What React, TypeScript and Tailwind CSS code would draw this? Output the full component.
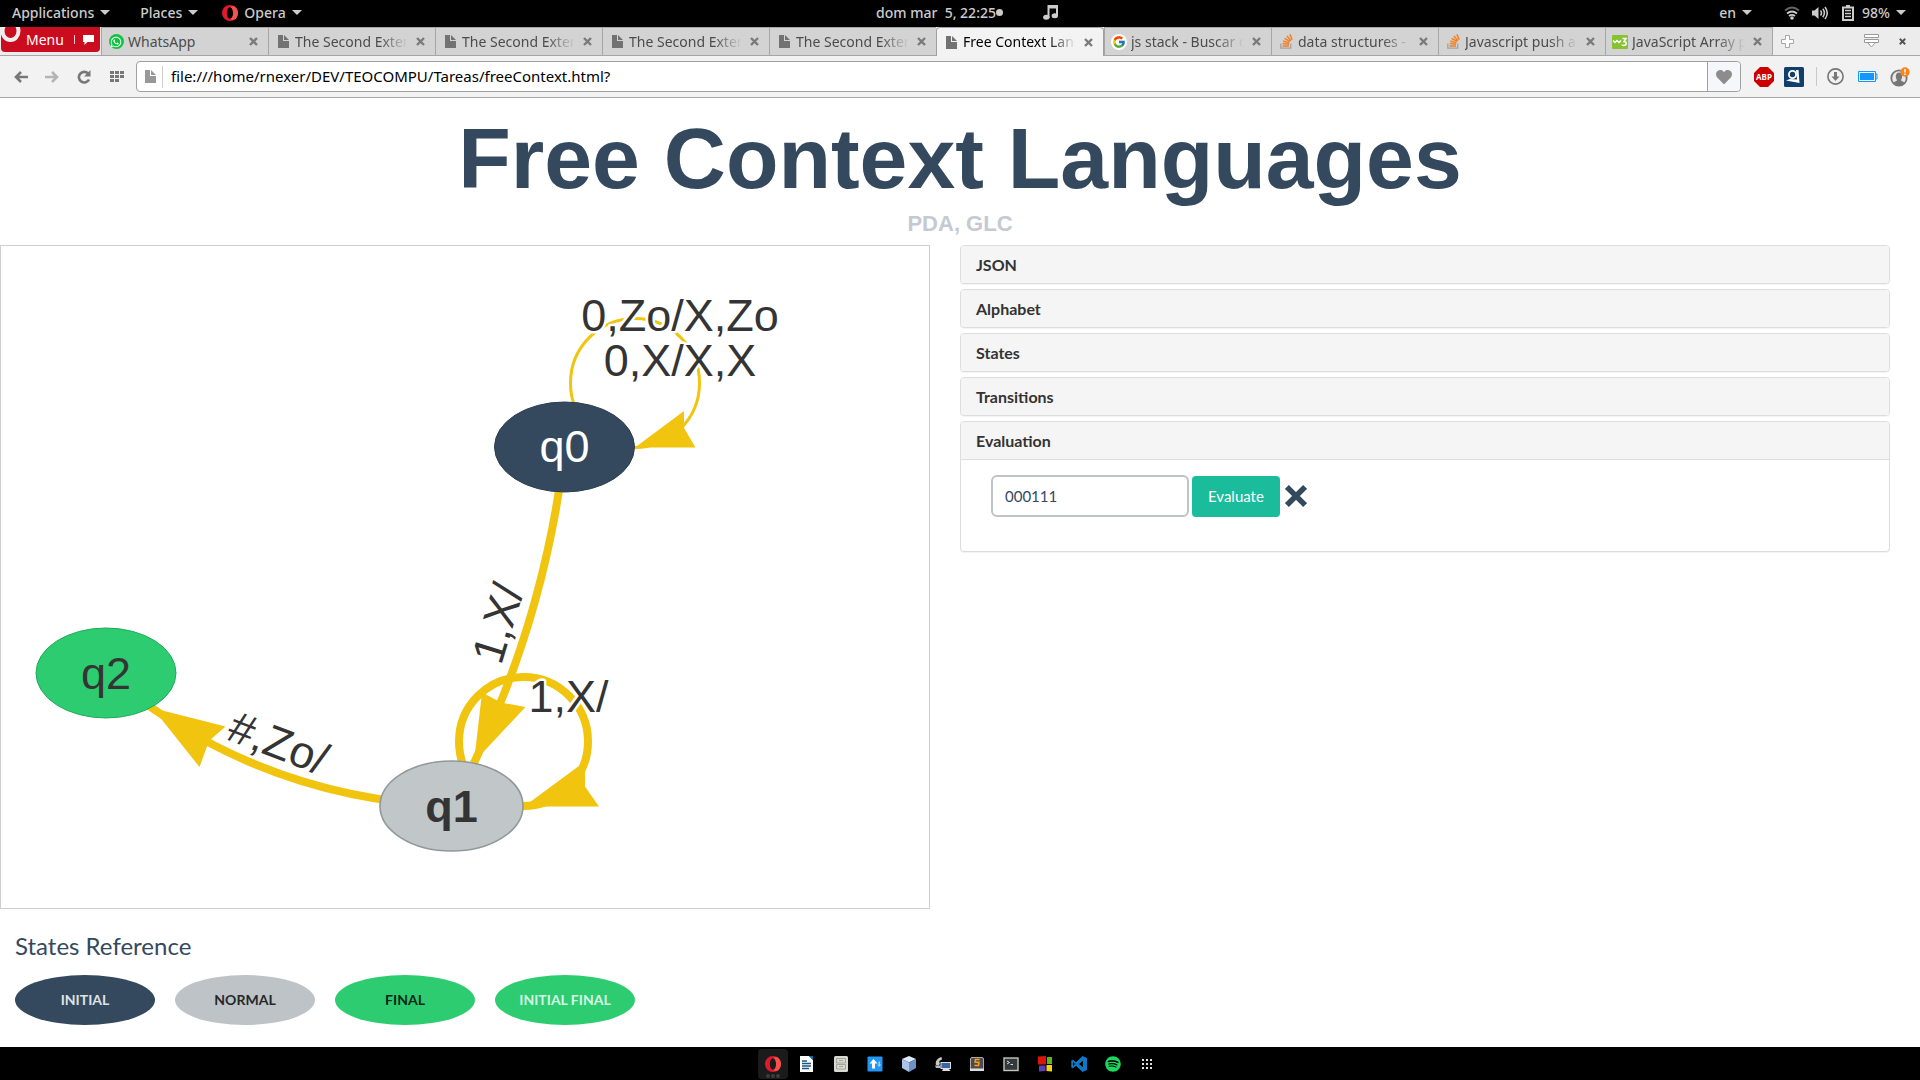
import { useState } from "react";
import type { ReactNode } from "react";
import { FcGoogle } from "react-icons/fc";
import { FaHeart, FaSpotify, FaWhatsapp } from "react-icons/fa";

function Caret() {
  return (
    <svg viewBox="0 0 10 5" className="h-[5px] w-2.5 fill-[#cccccc]" aria-hidden="true">
      <path d="M0 0h10L5 5z" />
    </svg>
  );
}

function OperaIcon({ className }: { className: string }) {
  return (
    <svg viewBox="0 0 16 16" className={className} aria-hidden="true">
      <path fill="#e3182b" fillRule="evenodd" d="M8 0a8 8 0 100 16A8 8 0 008 0zm0 2.2c1.9 0 3.1 2.6 3.1 5.8S9.900 13.800 8 13.800 4.900 11.200 4.900 8 6.100 2.200 8 2.200z" />
      <path fill="#f4534c" d="M8 2.200C9 1.200 10.800 1 12.200 1.200a8 8 0 010 13.600c-1.500.3-3.200 0-4.200-1 1.900 0 3.100-2.600 3.100-5.800S9.900 2.200 8 2.200z" />
    </svg>
  );
}

function PageIcon({ light = false }: { light?: boolean }) {
  return (
    <svg viewBox="0 0 11 13" className={light ? "h-[13px] w-[11px] shrink-0 fill-[#989898]" : "h-[13px] w-[11px] shrink-0 fill-[#727272]"} aria-hidden="true">
      <path d="M0 0h5v6h6v7H0z" />
      <path d="M6 0l5 5H6z" />
    </svg>
  );
}

function StackIcon() {
  return (
    <svg viewBox="0 0 13 15" className="h-[15px] w-[13px] shrink-0" fill="none" aria-hidden="true">
      <path stroke="#a0a3a6" strokeWidth="1.3" d="M.8 9.500v4.700h10V9.500" />
      <path stroke="#f48024" strokeWidth="1.500" d="M2.500 12h6.500M2.600 9.600l6.500.7M3.200 7l6.200 1.900M4.600 4.300l5.500 3.200M6.900 2l4.100 4.700M9.900.4l2.300 5.400" />
    </svg>
  );
}

function W3Icon() {
  return (
    <svg viewBox="0 0 16 14" className="h-3.5 w-4 shrink-0" aria-hidden="true">
      <rect width="16" height="14" rx="1" fill="#86c232" />
      <path d="M1 5.500l2 2 2-2 2 2 2-2M10.500 3.500h3.500l-2 3c3 0 3 4-.5 4-1 0-1.500-.5-1.500-1" stroke="#fff" strokeWidth="1.500" fill="none" />
    </svg>
  );
}

function CloseIcon({ small = false }: { small?: boolean }) {
  return (
    <svg viewBox="0 0 9 9" className={small ? "size-[7px]" : "size-[9px]"} aria-hidden="true">
      <path d="M1 1l7 7M8 1L1 8" stroke={small ? "#555" : "#7a7a7a"} strokeWidth="2.400" />
    </svg>
  );
}

function WhatsIcon() {
  return (
    <span className="flex size-[15px] shrink-0 items-center justify-center rounded-full bg-[#12c242] text-white">
      <FaWhatsapp size={12} />
    </span>
  );
}

function GIcon() {
  return (
    <span className="flex size-4 shrink-0 items-center justify-center rounded-full bg-white">
      <FcGoogle size={14} />
    </span>
  );
}

function SystemBar() {
  return (
    <header className="flex h-[27px] shrink-0 items-center bg-black pb-0.5 text-sm font-medium text-[#cccccc]">
      <nav className="flex flex-1 items-center gap-[30px] pl-3">
        <button className="flex items-center gap-1.5">Applications <Caret /></button>
        <button className="flex items-center gap-1.5">Places <Caret /></button>
        <button className="flex items-center gap-1.5"><OperaIcon className="-ml-1.5 size-4" /> Opera <Caret /></button>
      </nav>
      <div className="flex items-center pl-4">
        <span className="whitespace-pre">dom mar  5, 22:25</span>
        <span className="size-[7px] rounded-full bg-[#cccccc]" />
        <svg viewBox="0 0 15 15" className="ml-10 size-[15px] fill-[#cccccc]" aria-hidden="true">
          <path d="M4.500 0H15v11h-2V3.500H6.500V13h-2z" />
          <ellipse cx="3.300" cy="12.300" rx="3.200" ry="2.500" />
          <ellipse cx="11.800" cy="10.800" rx="3.200" ry="2.500" />
        </svg>
      </div>
      <div className="flex flex-1 items-center justify-end pr-3.5">
        <button className="flex items-center gap-1.5">en <Caret /></button>
        <svg viewBox="0 0 16 14" className="ml-8 h-3.5 w-4" fill="none" aria-hidden="true">
          <path d="M1 4.500Q8-1.500 15 4.500" stroke="#666" strokeWidth="1.800" />
          <path d="M3 7.500q5-4 10 0M5 10q3-2.200 6 0" stroke="#ccc" strokeWidth="1.800" />
          <circle cx="8" cy="12" r="1.800" fill="#ccc" />
        </svg>
        <svg viewBox="0 0 16 14" className="ml-3 h-3.5 w-4" fill="none" aria-hidden="true">
          <path d="M0 4.500h2.500L6.500 1v12L2.500 9.500H0z" fill="#ccc" />
          <path d="M8.500 4.500q2 2.500 0 5M10.800 2.800q3.200 4.200 0 8.400M13 1q4.500 6 0 12" stroke="#ccc" strokeWidth="1.500" />
        </svg>
        <svg viewBox="0 0 12 16" className="mr-2 ml-3.5 h-4 w-3" fill="none" stroke="#ccc" aria-hidden="true">
          <path d="M1 2.500h10V15H1zM4 1h4" strokeWidth="2" />
          <path d="M3 5.500h6M3 8.500h6M3 11.500h6" strokeWidth="1.500" />
        </svg>
        <button className="flex items-center gap-1.5">98% <Caret /></button>
      </div>
    </header>
  );
}

const tabs: { title: string; icon: ReactNode; active?: boolean }[] = [
  { title: "WhatsApp", icon: <WhatsIcon /> },
  { title: "The Second Exten", icon: <PageIcon /> },
  { title: "The Second Exten", icon: <PageIcon /> },
  { title: "The Second Exten", icon: <PageIcon /> },
  { title: "The Second Exten", icon: <PageIcon /> },
  { title: "Free Context Lan", icon: <PageIcon />, active: true },
  { title: "js stack - Buscar c", icon: <GIcon /> },
  { title: "data structures -", icon: <StackIcon /> },
  { title: "Javascript push ar", icon: <StackIcon /> },
  { title: "JavaScript Array p", icon: <W3Icon /> },
];

function TabStrip() {
  return (
    <div className="flex h-[29px] shrink-0 bg-[#ececec]">
      <div className="w-[101px] shrink-0 border-b border-[#a6a6a6] pl-px">
        <button className="relative flex h-[25px] w-[99px] items-center overflow-hidden rounded-b-sm bg-[#cb0c1e] pl-[25px] text-sm text-white">
          <svg viewBox="0 0 20 16" className="absolute top-0 left-0 h-4 w-5" aria-hidden="true">
            <ellipse cx="9.500" cy="4" rx="8" ry="9" fill="none" stroke="#eeeeee" strokeWidth="4" />
          </svg>
          Menu
          <span className="ml-2.5 h-[9px] w-px bg-white/80" />
          <svg viewBox="0 0 11 10" className="ml-2 h-2.5 w-[11px] fill-white" aria-hidden="true">
            <path d="M0 0h11v7H4.500L1.500 10V7H0z" />
          </svg>
        </button>
      </div>
      <div role="tablist" className="flex w-[1671px] min-w-0">
        {tabs.map((tab, i) => (
          <div
            key={i}
            className={
              tab.active
                ? "flex min-w-0 flex-1 items-center rounded-t border border-b-0 border-[#a0a0a0] bg-[#f3f3f3] px-1.5 text-black"
                : "flex min-w-0 flex-1 items-center border-y border-l border-[#a6a6a6] bg-[#d3d3d3] px-1.5 text-[#4c4c4c]"
            }
          >
            <button role="tab" aria-selected={!!tab.active} className="flex min-w-0 flex-1 items-center gap-1 text-sm">
              <span className="flex min-w-4 shrink-0 justify-center">{tab.icon}</span>
              <span
                className={
                  tab.title === "WhatsApp"
                    ? "min-w-0 flex-1 text-left whitespace-nowrap"
                    : "min-w-0 flex-1 overflow-hidden text-left whitespace-nowrap [mask-image:linear-gradient(to_right,black_75%,transparent)]"
                }
              >
                {tab.title}
              </span>
            </button>
            <button aria-label={"Close " + tab.title} className="mr-1 ml-2 shrink-0"><CloseIcon /></button>
          </div>
        ))}
      </div>
      <div className="flex min-w-[146px] flex-1 items-center border-b border-l border-[#a6a6a6] pr-3.5 pl-2">
        <button aria-label="New tab">
          <svg viewBox="0 0 13 13" className="size-[13px]" aria-hidden="true">
            <path d="M4.500.5h4v4h4v4h-4v4h-4v-4h-4v-4h4z" fill="#fff" stroke="#a6a6a6" />
          </svg>
        </button>
        <button aria-label="Tab menu" className="mr-5 ml-auto">
          <svg viewBox="0 0 15 14" className="h-3.5 w-[15px]" fill="#fff" stroke="#999" aria-hidden="true">
            <path d="M.5.5h14v3H.5zM.5 5.500h14v3H.5zM3.500 8.500h8l-4 4.500z" />
          </svg>
        </button>
        <button aria-label="Close window"><CloseIcon small /></button>
      </div>
    </div>
  );
}

function Toolbar() {
  return (
    <div className="flex h-[42px] shrink-0 items-center border-b border-[#a6a6a6] bg-[#f2f2f2] pr-2.5 pl-3.5">
      <button aria-label="Back">
        <svg viewBox="0 0 14 12" className="h-3 w-3.5" fill="none" stroke="#777" strokeWidth="2.600" aria-hidden="true"><path d="M7 1L2 6l5 5M2 6h12" /></svg>
      </button>
      <button aria-label="Forward" className="ml-[17px]">
        <svg viewBox="0 0 14 12" className="h-3 w-3.5" fill="none" stroke="#b4b4b4" strokeWidth="2.600" aria-hidden="true"><path d="M7 1l5 5-5 5M12 6H0" /></svg>
      </button>
      <button aria-label="Reload" className="ml-[18px]">
        <svg viewBox="0 0 14 14" className="size-3.5" fill="none" aria-hidden="true">
          <path d="M11 3.500A5.300 5.300 0 1012 9.500" stroke="#777" strokeWidth="2.600" />
          <path d="M13.500 0v6.500H7z" fill="#777" />
        </svg>
      </button>
      <button aria-label="Speed dial" className="ml-[19px]">
        <svg viewBox="0 0 14 12" className="h-3 w-3.5 fill-[#777]" aria-hidden="true">
          <path d="M0 0h4v3H0zM5 0h4v3H5zM10 0h4v3h-4zM0 4h4v3H0zM5 4h4v3H5zM10 4h4v3h-4zM0 8h4v3H0zM5 8h4v3H5z" />
        </svg>
      </button>
      <div className="ml-3 flex h-[31px] min-w-0 flex-1 items-center rounded-sm border border-[#a0a0a0] bg-white pl-2">
        <PageIcon light />
        <span className="ml-1.5 h-[22px] w-px bg-[#cfcfcf]" />
        <input aria-label="Address" defaultValue="file:///home/rnexer/DEV/TEOCOMPU/Tareas/freeContext.html?" className="ml-2 h-full min-w-0 flex-1 bg-transparent pb-0.5 text-[15px] text-black outline-none" />
        <button aria-label="Bookmark" className="flex h-full w-[33px] items-center justify-center rounded-r-sm border-l border-[#a0a0a0] bg-[#f6f7fa] text-[#8c8c8c]"><FaHeart size={16} /></button>
      </div>
      <button aria-label="Adblock Plus" className="ml-[13px]">
        <svg viewBox="0 0 20 20" className="size-5" aria-hidden="true">
          <path d="M6 0h8l6 6v8l-6 6H6l-6-6V6z" fill="#cc0000" />
          <text x="10" y="13" textAnchor="middle" fontSize="8" fontWeight="700" fill="#fff">ABP</text>
        </svg>
      </button>
      <button aria-label="Extension" className="ml-2.5">
        <svg viewBox="0 0 20 20" className="size-5" aria-hidden="true">
          <rect width="20" height="20" rx="1.500" fill="#123e6b" />
          <path d="M12 3h2.500l1 13-13.500-2.500 4-1.500 7 .5z" fill="#fff" />
          <circle cx="8.500" cy="7.500" r="3.600" fill="#123e6b" stroke="#fff" strokeWidth="1.800" />
        </svg>
      </button>
      <span className="ml-3 h-[19px] w-px bg-[#c8c8c8]" />
      <button aria-label="Downloads" className="ml-2.5">
        <svg viewBox="0 0 17 17" className="size-[17px]" fill="none" stroke="#777" aria-hidden="true">
          <circle cx="8.500" cy="8.500" r="7.600" strokeWidth="1.600" />
          <path d="M8.500 4v5" strokeWidth="3" />
          <path d="M4.500 8.500h8l-4 4.500z" fill="#777" stroke="none" />
        </svg>
      </button>
      <button aria-label="Battery saver" className="ml-3.5">
        <svg viewBox="0 0 20 11" className="h-[11px] w-5" aria-hidden="true">
          <path d="M.5.5h17v10H.5zM17.500 3h1.500v5h-1.500" fill="none" stroke="#1496ff" />
          <path d="M2 2h14v7H2z" fill="#1496ff" />
        </svg>
      </button>
      <button aria-label="Account" className="ml-3">
        <svg viewBox="0 0 20 20" className="size-5" aria-hidden="true">
          <circle cx="9" cy="11" r="7.700" fill="#e9e9e9" stroke="#777" strokeWidth="1.800" />
          <path d="M3.500 16c1-2 3.500-1.500 3.500-3C5 10.500 5.500 5.500 9 5.500s4 5 2 7.500c0 1.500 2.500 1 3.500 3-3 3.200-8 3.200-11 0z" fill="#777" />
          <circle cx="15" cy="5" r="4.700" fill="#f5861f" />
          <path d="M15 2v3.500M15 6.500V8" stroke="#fff" strokeWidth="1.400" />
        </svg>
      </button>
    </div>
  );
}

function Diagram() {
  return (
    <svg
      viewBox="1 246 928 662"
      className="block h-auto w-full"
      fontFamily="'Liberation Sans', Arial, sans-serif"
      fontSize="45"
      role="img"
      aria-label="Pushdown automaton"
    >
      <g fill="none" stroke="#f1c40f" strokeWidth="8">
        <circle cx="635" cy="383" r="64.500" strokeWidth="3" />
        <circle cx="523.500" cy="741.500" r="64.500" />
        <path d="M565 447Q543 638 452 806" />
        <path d="M452 806Q256 799 106 673" />
      </g>
      <g fill="#f1c40f">
        <path d="M635 447.500L684 411v17l11.500 19.500z" />
        <path d="M524 806.500l61-45v25l14 20z" />
        <path d="M474 762l8-69.500 19 10 24.500 4.500z" />
        <path d="M152.500 708l73 18.500L209 741l-9.500 26z" />
      </g>
      <g>
        <ellipse cx="564.500" cy="447" rx="70" ry="45" fill="#34495e" stroke="#2c3e50" />
        <ellipse cx="451.500" cy="806" rx="71.500" ry="45" fill="#c1c6c9" stroke="#90989c" strokeWidth="1.600" />
        <ellipse cx="106" cy="673" rx="70" ry="45" fill="#2ecc71" stroke="#1fab59" />
      </g>
      <g textAnchor="middle" fill="#343434">
        <text x="564.500" y="462" fill="#ffffff">q0</text>
        <text x="451.500" y="821.500" fontWeight="700">q1</text>
        <text x="106" y="688.500">q2</text>
      </g>
      <g fill="#343434" stroke="#ffffff" strokeWidth="5" strokeLinejoin="round" paintOrder="stroke">
        <text x="680" y="330.500" textAnchor="middle">0,Zo/X,Zo</text>
        <text x="680" y="375.500" textAnchor="middle">0,X/X,X</text>
        <text transform="translate(501 666) rotate(-73)">1,X/</text>
        <text x="528.500" y="711.500">1,X/</text>
        <text transform="translate(225 739) rotate(21)">#,Zo/</text>
      </g>
    </svg>
  );
}

const legend = [
  { label: "INITIAL", style: "bg-[#34495e] text-[#dfe2e5]" },
  { label: "NORMAL", style: "bg-[#bdc3c7] text-[#262728]" },
  { label: "FINAL", style: "bg-[#2ecc71] text-[#092916]" },
  { label: "INITIAL FINAL", style: "bg-[#2ecc71] text-[#d5f5e3]" },
];

const sections = ["JSON", "Alphabet", "States", "Transitions", "Evaluation"];

function Accordion() {
  const [open, setOpen] = useState("Evaluation");
  return (
    <div className="flex flex-col gap-[5px]">
      {sections.map((name) => (
        <section key={name} className="overflow-hidden rounded border border-[#dddddd] bg-white shadow-[0_1px_1px_rgba(0,0,0,0.05)]">
          <h2>
            <button onClick={() => setOpen(name)} aria-expanded={open === name} className="block h-[37px] w-full bg-[#f5f5f5] px-[15px] text-left text-base font-bold text-[#333333]">
              {name}
            </button>
          </h2>
          {open === name && name === "Evaluation" && (
            <form onSubmit={(e) => e.preventDefault()} className="flex items-center gap-[3px] border-t border-[#dddddd] px-[30px] pt-[15px] pb-[34px]">
              <input aria-label="String to evaluate" defaultValue="000111" className="h-[42px] w-[198px] rounded-md border-2 border-[#bdc3c7] bg-white px-3 text-[15px] text-[#34495e] outline-none" />
              <button className="h-[41px] rounded bg-[#1abc9c] px-4 text-[15px] text-white">Evaluate</button>
              <svg viewBox="0 0 20 20" className="ml-0.5 size-[22px]" role="img" aria-label="Rejected">
                <path d="M3.500 3.500l13 13M16.500 3.500l-13 13" stroke="#34495e" strokeWidth="5" strokeLinecap="square" />
              </svg>
            </form>
          )}
        </section>
      ))}
    </div>
  );
}

function Page() {
  return (
    <main className="flex-1 bg-white font-['Lato',sans-serif] text-[#34495e]">
      <div className="text-center font-['Liberation_Sans',Arial,sans-serif] font-bold">
        <h1 className="pt-[14px] text-[86px] leading-[92px]">Free Context Languages</h1>
        <p className="pt-1 pb-[5px] text-[22px] leading-8 text-[#c5cad2]">PDA, GLC</p>
      </div>
      <div className="grid grid-cols-2 items-start gap-[30px] pr-[30px]">
        <div className="border border-[#cfcfcf]"><Diagram /></div>
        <Accordion />
      </div>
      <section className="px-[15px] pt-[19px]">
        <h2 className="text-2xl leading-9">States Reference</h2>
        <ul className="mt-[11px] flex gap-5 text-sm font-bold">
          {legend.map((item) => (
            <li key={item.label} className={"flex h-[50px] w-[140px] items-center justify-center rounded-[50%] " + item.style}>{item.label}</li>
          ))}
        </ul>
      </section>
    </main>
  );
}

const dock: { name: string; icon: ReactNode }[] = [
  {
    name: "Writer",
    icon: (
      <svg viewBox="0 0 16 16" className="size-4">
        <path d="M1 0h9l4 4v12H1z" fill="#fff" />
        <path d="M10 0h4v4z" fill="#0b6cb0" />
        <path d="M3 5h5M3 7.500h9M3 10h9M3 12.500h7" stroke="#1b5583" strokeWidth="1.400" />
      </svg>
    ),
  },
  {
    name: "Files",
    icon: (
      <svg viewBox="0 0 16 16" className="size-4">
        <rect x="1" width="14" height="16" rx="1.500" fill="#d9d9d4" />
        <path d="M3.500 2.500h9v4.500h-9zM3.500 8.500h9V13h-9zM6 4.500h4M6 10.500h4" fill="none" stroke="#a3a39b" />
      </svg>
    ),
  },
  {
    name: "Transfer",
    icon: (
      <svg viewBox="0 0 16 16" className="size-4">
        <rect x=".5" y=".5" width="15" height="15" rx="1" fill="#2196f3" />
        <path d="M6.500 3L2.500 7.500h2.500v5h3v-5h2.500z" fill="#fff" />
        <path d="M11.500 5.500v3h-1.300l2 2.500 2-2.500h-1.200v-3z" fill="#9bd0fb" />
      </svg>
    ),
  },
  {
    name: "VirtualBox",
    icon: (
      <svg viewBox="0 0 16 16" className="size-4">
        <path d="M8 0l7 3-7 3.500L1 3z" fill="#dbe9f8" />
        <path d="M1 3l7 3.500V16l-7-4z" fill="#a9c4e6" />
        <path d="M15 3L8 6.500V16l7-4z" fill="#6f92c4" />
      </svg>
    ),
  },
  {
    name: "Remote",
    icon: (
      <svg viewBox="0 0 16 16" className="size-4">
        <path d="M6.500 1C2 2 0 6 1 9l3 .5 1-2.500-1-1q.5-2 3-2.500z" fill="#c9c9c9" />
        <path d="M0 9.500h5.500V12H1z" fill="#bbb" />
        <rect x="6" y="6.500" width="9.500" height="6" fill="#3465a4" stroke="#ddd" />
        <path d="M8 13h6l1.500 2H7z" fill="#ddd" />
      </svg>
    ),
  },
  {
    name: "Sublime Text",
    icon: (
      <svg viewBox="0 0 16 16" className="size-4">
        <rect x="1.500" y="1.500" width="13" height="13" rx="1.500" fill="#4c4c4c" stroke="#a9a9a9" />
        <path d="M1 12.500h14V15H1z" fill="#ddd" />
        <path d="M10.500 3.500h-4L6 6l4 .5-.5 3H5.500" fill="none" stroke="#ff9b1a" strokeWidth="1.500" />
      </svg>
    ),
  },
  {
    name: "Terminal",
    icon: (
      <svg viewBox="0 0 16 16" className="size-4">
        <rect x="1" y="2" width="14" height="12.500" fill="#33393b" stroke="#c4c4bf" strokeWidth="1.400" />
        <path d="M4 5l2.500 1.500L4 8M7.500 8.500H10" stroke="#ddd" fill="none" />
      </svg>
    ),
  },
  {
    name: "Color tiles",
    icon: (
      <svg viewBox="0 0 16 16" className="size-4">
        <path d="M1 .5L9 0v8.500H1z" fill="#d91408" />
        <path d="M10 1h5v7h-5z" fill="#59b61c" />
        <path d="M2 9.500h6.500V15L2 15.500z" fill="#5940b5" />
        <path d="M9.500 9H15v6.500l-5.500-.5z" fill="#f7d417" />
      </svg>
    ),
  },
  {
    name: "Visual Studio Code",
    icon: (
      <svg viewBox="0 0 16 16" className="size-4">
        <path fill="#0f78c4" fillRule="evenodd" d="M11.500 0L16 2v12l-4.500 2L5 9.800 2 12.200.3 11.400V4.600L2 3.800l3 2.400zM12 4.800L8 8l4 3.200zM2 6v4l2-2z" />
      </svg>
    ),
  },
  {
    name: "Spotify",
    icon: <FaSpotify size={16} color="#1ed760" />,
  },
  {
    name: "Show applications",
    icon: (
      <svg viewBox="0 0 16 16" className="size-4 fill-[#e0e0e0]">
        <path d="M3 3h2v2H3zM7 3h2v2H7zM11 3h2v2h-2zM3 7h2v2H3zM7 7h2v2H7zM11 7h2v2h-2zM3 11h2v2H3zM7 11h2v2H7zM11 11h2v2h-2z" />
      </svg>
    ),
  },
];

function Dock() {
  return (
    <footer className="flex h-[33px] shrink-0 items-center justify-center gap-1 bg-black">
      <button aria-label="Opera" className="flex size-[30px] flex-col items-center justify-end gap-0.5 rounded-sm bg-[#1b1b1b] pb-px">
        <OperaIcon className="size-4" />
        <span className="flex gap-px">
          <i className="size-1 rounded-full bg-[#3d3d3d]" />
          <i className="size-1 rounded-full bg-[#3d3d3d]" />
          <i className="size-1 rounded-full bg-[#3d3d3d]" />
        </span>
      </button>
      {dock.map((app) => (
        <button key={app.name} aria-label={app.name} className="flex size-[30px] items-center justify-center">{app.icon}</button>
      ))}
    </footer>
  );
}

export default function App() {
  return (
    <div className="flex min-h-screen flex-col bg-black font-['Noto_Sans',sans-serif]">
      <SystemBar />
      <TabStrip />
      <Toolbar />
      <Page />
      <Dock />
    </div>
  );
}
